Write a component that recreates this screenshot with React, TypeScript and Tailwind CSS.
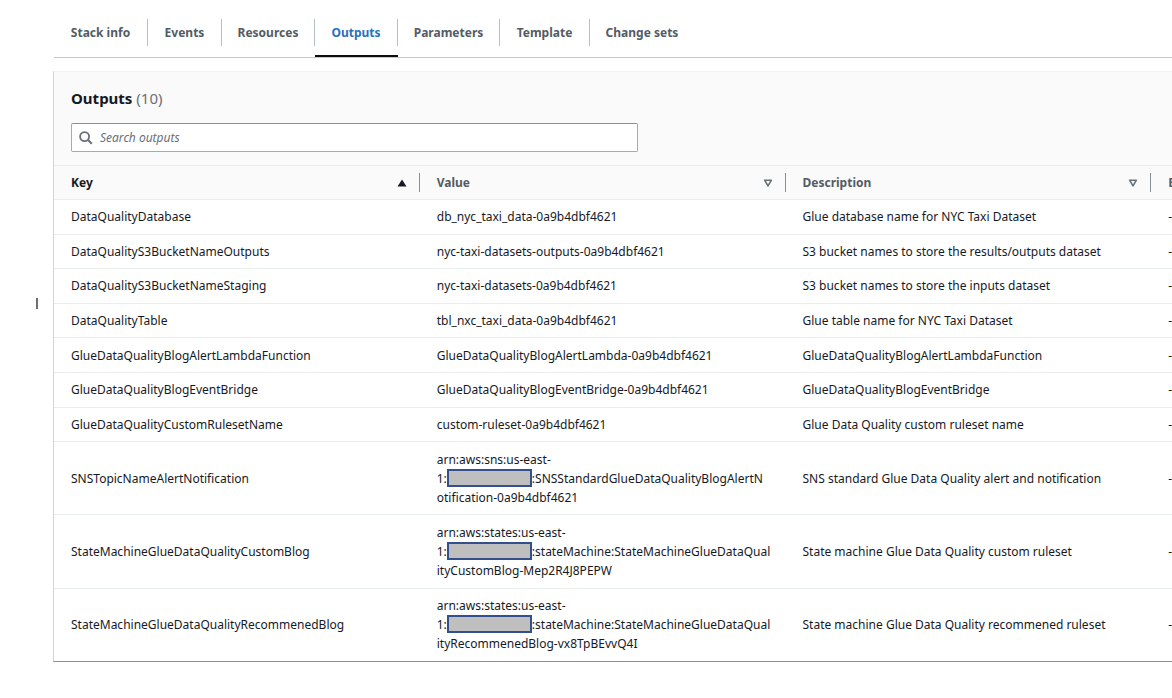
import { useState } from "react";

type Output = {
  key: string;
  value: string[];
  description: string;
};

const TABS = [
  { label: "Stack info", width: "w-[94px]" },
  { label: "Events", width: "w-[74px]" },
  { label: "Resources", width: "w-[93px]" },
  { label: "Outputs", width: "w-[83px]" },
  { label: "Parameters", width: "w-[102px]" },
  { label: "Template", width: "w-[90px]" },
  { label: "Change sets", width: "w-[105px]" },
];

// "#" stands for the hidden account id
const OUTPUTS: Output[] = [
  {
    key: "DataQualityDatabase",
    value: ["db_nyc_taxi_data-0a9b4dbf4621"],
    description: "Glue database name for NYC Taxi Dataset",
  },
  {
    key: "DataQualityS3BucketNameOutputs",
    value: ["nyc-taxi-datasets-outputs-0a9b4dbf4621"],
    description: "S3 bucket names to store the results/outputs dataset",
  },
  {
    key: "DataQualityS3BucketNameStaging",
    value: ["nyc-taxi-datasets-0a9b4dbf4621"],
    description: "S3 bucket names to store the inputs dataset",
  },
  {
    key: "DataQualityTable",
    value: ["tbl_nxc_taxi_data-0a9b4dbf4621"],
    description: "Glue table name for NYC Taxi Dataset",
  },
  {
    key: "GlueDataQualityBlogAlertLambdaFunction",
    value: ["GlueDataQualityBlogAlertLambda-0a9b4dbf4621"],
    description: "GlueDataQualityBlogAlertLambdaFunction",
  },
  {
    key: "GlueDataQualityBlogEventBridge",
    value: ["GlueDataQualityBlogEventBridge-0a9b4dbf4621"],
    description: "GlueDataQualityBlogEventBridge",
  },
  {
    key: "GlueDataQualityCustomRulesetName",
    value: ["custom-ruleset-0a9b4dbf4621"],
    description: "Glue Data Quality custom ruleset name",
  },
  {
    key: "SNSTopicNameAlertNotification",
    value: [
      "arn:aws:sns:us-east-",
      "1:#:SNSStandardGlueDataQualityBlogAlertN",
      "otification-0a9b4dbf4621",
    ],
    description: "SNS standard Glue Data Quality alert and notification",
  },
  {
    key: "StateMachineGlueDataQualityCustomBlog",
    value: [
      "arn:aws:states:us-east-",
      "1:#:stateMachine:StateMachineGlueDataQual",
      "ityCustomBlog-Mep2R4J8PEPW",
    ],
    description: "State machine Glue Data Quality custom ruleset",
  },
  {
    key: "StateMachineGlueDataQualityRecommenedBlog",
    value: [
      "arn:aws:states:us-east-",
      "1:#:stateMachine:StateMachineGlueDataQual",
      "ityRecommenedBlog-vx8TpBEvvQ4I",
    ],
    description: "State machine Glue Data Quality recommened ruleset",
  },
];

const COLUMNS = ["Key", "Value", "Description", "Export name"];

function SortIcon({ active }: { active: boolean }) {
  if (active) {
    return (
      <svg width="10" height="8" viewBox="0 0 10 8" aria-hidden>
        <path d="M5 0.5 9.5 7.5H0.5Z" fill="#16191f" />
      </svg>
    );
  }
  return (
    <svg width="10" height="8" viewBox="0 0 10 8" aria-hidden>
      <path
        d="M1.6 1.2H8.4L5 6.8Z"
        fill="none"
        stroke="#687078"
        strokeWidth="1.6"
        strokeLinejoin="round"
      />
    </svg>
  );
}

function SearchIcon() {
  return (
    <svg width="14" height="14" viewBox="0 0 14 14" fill="none" aria-hidden>
      <circle cx="5.6" cy="5.6" r="4.5" stroke="#687078" strokeWidth="1.8" />
      <path d="M8.8 8.8 12.8 12.8" stroke="#687078" strokeWidth="2" />
    </svg>
  );
}

function ValueLine({ text }: { text: string }) {
  const [before, after] = text.split("#");
  if (after === undefined) return <span className="block">{text}</span>;
  return (
    <span className="flex items-start">
      {before}
      <span className="h-[18px] w-[85px] shrink-0 border-2 border-[#34508c] bg-[#bfbfbf]" />
      {after}
    </span>
  );
}

function Tabs() {
  const [selected, setSelected] = useState("Outputs");
  return (
    <div role="tablist" className="ml-px flex border-b border-[#c3caca] pt-[19px]">
      {TABS.map(({ label, width }) => (
        <button
          key={label}
          type="button"
          role="tab"
          aria-selected={label === selected}
          onClick={() => setSelected(label)}
          className={`group flex shrink-0 flex-col whitespace-nowrap font-bold ${width} ${
            label === selected ? "text-[#2b70bd]" : "text-[#545b64]"
          }`}
        >
          <span className="flex h-[27px] w-full items-center justify-center border-r border-[#b8c1c1] group-last:border-transparent">
            {label}
          </span>
          <span
            className={`mt-[9px] h-[2px] w-full ${
              label === selected ? "bg-[#0b0d12]" : "bg-transparent"
            }`}
          />
        </button>
      ))}
    </div>
  );
}

function OutputsTable() {
  return (
    <table className="h-[496px] w-[1463px] table-fixed border-collapse text-left">
      <thead className="bg-[#fafafa]">
        <tr className="border-y border-[#eaeded]">
          {COLUMNS.map((name, i) => (
            <th key={name} scope="col" className="px-0 py-[7px]">
              <button
                type="button"
                className={`flex h-[19px] w-full items-center justify-between border-r border-[#879196] pl-[17px] pr-3 font-bold ${
                  i === 0 ? "text-[#16191f]" : "text-[#545b64]"
                }`}
              >
                {name}
                <SortIcon active={i === 0} />
              </button>
            </th>
          ))}
        </tr>
      </thead>
      <tbody>
        {OUTPUTS.map((row) => (
          <tr key={row.key} className="border-b border-[#eaeded] last:border-b-0">
            <td className="py-[7px] pl-[17px]">{row.key}</td>
            <td className="whitespace-nowrap py-[7px] pl-[17px]">
              {row.value.map((line) => (
                <ValueLine key={line} text={line} />
              ))}
            </td>
            <td className="py-[7px] pl-[17px]">{row.description}</td>
            <td className="py-[7px] pl-[17px]">-</td>
          </tr>
        ))}
      </tbody>
    </table>
  );
}

export default function App() {
  return (
    <div className="flex min-h-screen overflow-hidden bg-white font-['Noto_Sans','Open_Sans',sans-serif] text-[12px] leading-[19px] text-[#16191f]">
      <div className="flex w-[53px] shrink-0 items-start pl-9 pt-[298px]">
        <span className="h-[11px] w-[2px] bg-[#6b6f7b]" />
      </div>
      <main className="min-w-0 flex-1">
        <Tabs />
        <section className="mt-[13px] overflow-hidden border-b border-l border-t border-b-[#879196] border-l-[#d0d5d5] border-t-[#f0f2f2]">
          <header className="bg-[#fafafa] px-[17px] pb-[13px] pt-[15px]">
            <h2 className="text-[15px] font-bold leading-[22px]">
              Outputs <span className="font-normal text-[#687078]">(10)</span>
            </h2>
            <label className="mt-[14px] flex h-[29px] max-w-[567px] items-center gap-[7px] rounded-[2px] border border-[#a3abab] border-t-[#879196] bg-white px-[7px]">
              <SearchIcon />
              <input
                type="search"
                aria-label="Search outputs"
                placeholder="Search outputs"
                className="min-w-0 flex-1 bg-transparent outline-none placeholder:italic placeholder:text-[#687078]"
              />
            </label>
          </header>
          <OutputsTable />
        </section>
      </main>
    </div>
  );
}
